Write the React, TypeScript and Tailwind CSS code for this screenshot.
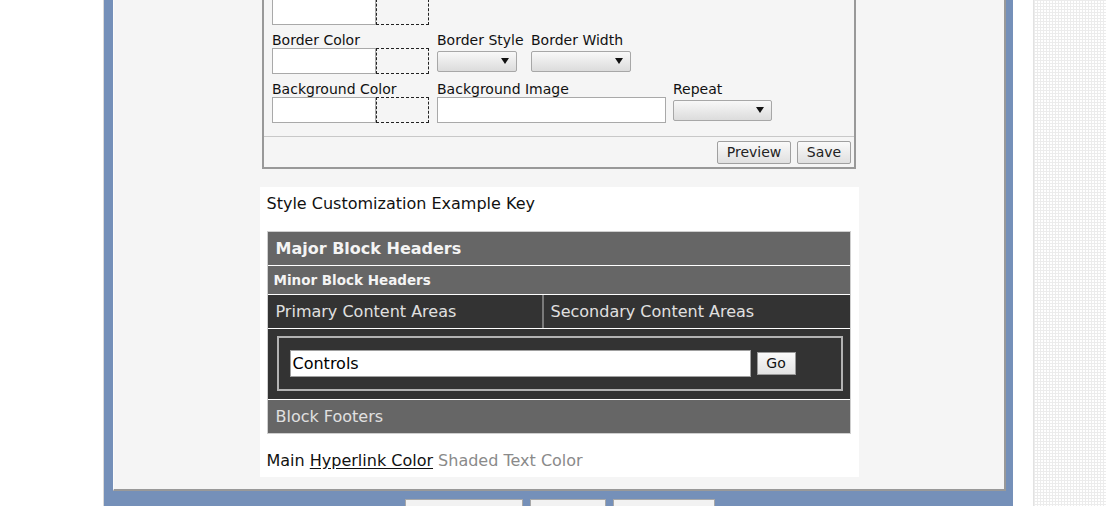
function Select({ w }: { w: string }) {
  return (
    <div
      className={`relative mt-[3px] h-[21px] ${w} rounded-[2px] border border-[#a7a7a7] bg-gradient-to-b from-[#f8f8f8] to-[#dcdcdc]`}
    >
      <svg className="absolute right-[7px] top-[6px]" width="8" height="6" viewBox="0 0 8 6">
        <path d="M0 0h8L4 6z" fill="#111" />
      </svg>
    </div>
  );
}

function ColorInput() {
  return (
    <div className="flex">
      <div className="h-[26px] w-[104px] border border-[#a9a9a9] bg-white" />
      <div className="h-[26px] w-[53px] border border-dashed border-[#222]" />
    </div>
  );
}

function Label({ children }: { children: string }) {
  return (
    <div className="translate-y-px whitespace-nowrap text-[14px] leading-[17px] text-[#111]">{children}</div>
  );
}

function FormBox() {
  return (
    <div className="-mt-[12px] w-[594px] border-2 border-[#999] bg-[#f5f5f5]">
      <div className="flex flex-col pl-[8px] pt-[9px]">
        <div className="flex gap-[7px]">
          <div className="w-[158px]">
            <ColorInput />
          </div>
        </div>

        <div className="mt-[6px] flex gap-[7px]">
          <div className="w-[158px]">
            <Label>Border Color</Label>
            <ColorInput />
          </div>
          <div className="w-[87px]">
            <Label>Border Style</Label>
            <Select w="w-[80px]" />
          </div>
          <div>
            <Label>Border Width</Label>
            <Select w="w-[100px]" />
          </div>
        </div>

        <div className="mt-[6px] flex gap-[7px]">
          <div className="w-[158px]">
            <Label>Background Color</Label>
            <ColorInput />
          </div>
          <div className="w-[229px]">
            <Label>Background Image</Label>
            <div className="h-[26px] w-[229px] border border-[#a9a9a9] bg-white" />
          </div>
          <div>
            <Label>Repeat</Label>
            <Select w="w-[99px]" />
          </div>
        </div>
      </div>

      {/* buttons */}
      <div className="mt-[13px] flex justify-end gap-[6px] border-t border-[#c8c8c8] pb-[3px] pr-[3px] pt-[4px]">
        <button className="h-[23px] w-[74px] rounded-[2px] border border-[#a0a0a0] bg-gradient-to-b from-[#fafafa] to-[#e0e0e0] text-[14px] leading-[21px] text-[#222]">
          Preview
        </button>
        <button className="h-[23px] w-[54px] rounded-[2px] border border-[#a0a0a0] bg-gradient-to-b from-[#fafafa] to-[#e0e0e0] text-[14px] leading-[21px] text-[#222]">
          Save
        </button>
      </div>
    </div>
  );
}

function KeyBox() {
  return (
    <div className="mt-[18px] w-[599px] bg-white pb-[7px] pl-[7px] pr-[8px] pt-[7px]">
      <div className="text-[16px] leading-[19px] text-[#111]">Style Customization Example Key</div>

      <div className="mt-[18px] flex flex-col gap-px border border-[#cfcfcf] bg-white">
        <div className="flex h-[33px] items-center bg-[#666] pl-[8px] text-[16px] font-bold text-[#f4f4f4]">
          Major Block Headers
        </div>
        <div className="flex h-[28px] items-center bg-[#666] pl-[6px] text-[13.5px] font-bold text-[#f4f4f4]">
          Minor Block Headers
        </div>
        <div className="flex h-[33px] bg-[#333] text-[16px] text-[#e0e0e0]">
          <div className="flex w-[276px] items-center border-r-2 border-[#7a7a7a] pl-[8px]">
            Primary Content Areas
          </div>
          <div className="flex flex-1 items-center pl-[7px]">Secondary Content Areas</div>
        </div>
        <div className="h-[70px] bg-[#333] pb-[8px] pl-[9px] pr-[7px] pt-[7px]">
          <div className="flex h-[55px] items-center border-2 border-[#b3b3b3] pl-[11px]">
            <div className="h-[27px] w-[461px] border border-[#a0a0a0] bg-white pl-[2px] text-[16px] leading-[25px] text-black">
              Controls
            </div>
            <button className="ml-[6px] h-[23px] w-[39px] border border-[#9a9a9a] bg-gradient-to-b from-[#fafafa] to-[#e2e2e2] text-[14px] leading-[21px] text-[#111]">
              Go
            </button>
          </div>
        </div>
        <div className="flex h-[33px] items-center bg-[#666] pl-[8px] text-[16px] text-[#e0e0e0]">
          Block Footers
        </div>
      </div>

      <div className="mt-[17px] text-[16px] leading-[19px] text-[#111]">
        Main <span className="underline underline-offset-2">Hyperlink Color</span>{" "}
        <span className="text-[#8a8a8a]">Shaded Text Color</span>
      </div>
    </div>
  );
}

export default function App() {
  return (
    <div className="flex h-[506px] w-[1106px] overflow-hidden bg-white font-['DejaVu_Sans',Verdana,sans-serif]">
      <div className="w-[103px] shrink-0" />

      <div className="flex w-[910px] shrink-0 flex-col border-l border-[#d9d9d9] bg-[#7590b9] pl-[9px] pr-[7px]">
        <div className="flex flex-col items-center border-b-2 border-l border-r-2 border-[#999] border-l-[#fbfbfb] bg-[#f5f5f5] pb-[12px]">
          <FormBox />
          <KeyBox />
        </div>

        <div className="flex justify-center gap-[7px] pt-[8px]">
          <div className="h-[30px] w-[118px] border border-[#a8a8a8] bg-[#f2f2f2]" />
          <div className="h-[30px] w-[76px] border border-[#a8a8a8] bg-[#f2f2f2]" />
          <div className="h-[30px] w-[102px] border border-[#a8a8a8] bg-[#f2f2f2]" />
        </div>
      </div>

      <div className="w-[20px] shrink-0" />
      <div className="flex-1 border-l border-[#e2e2e2] bg-[linear-gradient(to_right,#ececec_1px,transparent_1px),linear-gradient(to_bottom,#ececec_1px,transparent_1px)] bg-[size:3px_3px]" />
    </div>
  );
}
